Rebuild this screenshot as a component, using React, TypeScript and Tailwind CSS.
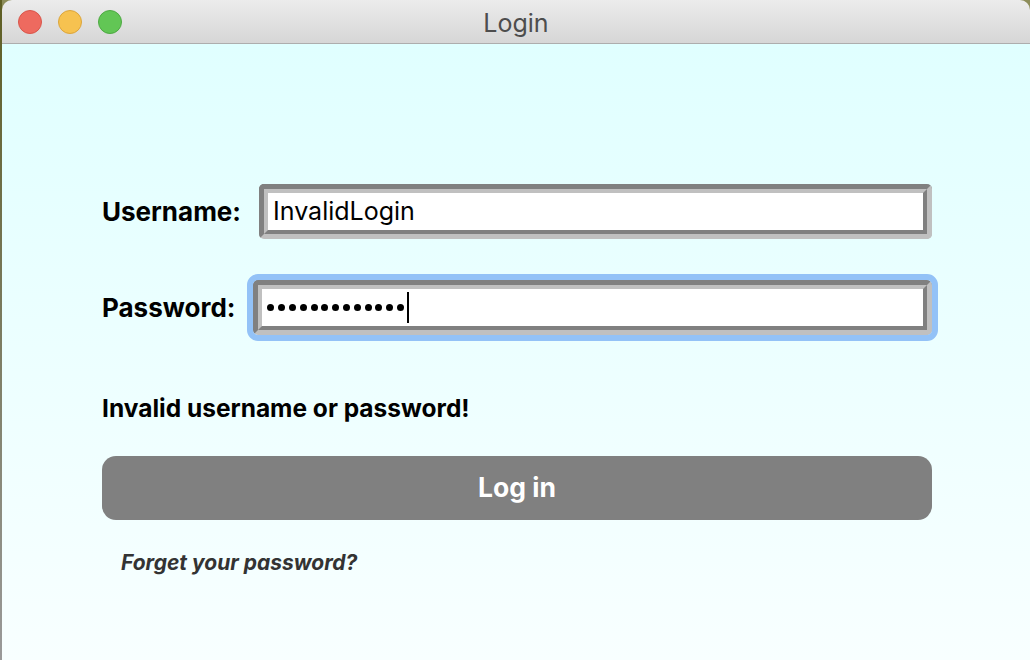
import { useState } from "react";

const font = { fontFamily: "Inter, 'Noto Sans', sans-serif" };

const Field = ({ children, focused }: { children: React.ReactNode; focused?: boolean }) => (
  <div
    className={`flex-1 rounded-[5px] ${
      focused ? "outline outline-[6px] outline-[#93c2f7]" : ""
    }`}
  >
    <div className="rounded-[5px] border-[5px] border-t-[#808080] border-l-[#808080] border-b-[#c0c0c0] border-r-[#c0c0c0]">
      <div className="h-[45px] border-[4px] border-t-[#c0c0c0] border-l-[#c0c0c0] border-b-[#808080] border-r-[#808080] bg-white flex items-center px-[4px]">
        {children}
      </div>
    </div>
  </div>
);

export default function App() {
  const [user] = useState("InvalidLogin");
  const dots = Array.from({ length: 13 });

  return (
    <div className="w-[1030px] h-[660px] bg-[#8d8d5a] flex" style={font}>
      <div className="w-[2px] bg-gradient-to-b from-[#5e5e22] to-[#9a9a9a]" />
      <div className="flex-1 flex flex-col rounded-t-[10px] overflow-hidden">
        {/* Title bar */}
        <div className="relative h-[44px] bg-gradient-to-b from-[#ececec] to-[#d6d6d6] border-b border-[#adadad] flex items-center justify-center pt-[2px]">
          <div className="absolute left-[16px] top-[10px] flex gap-[16px]">
            <span className="w-[24px] h-[24px] rounded-full bg-[#ee6a5f] border border-[#d8564b]" />
            <span className="w-[24px] h-[24px] rounded-full bg-[#f6c250] border border-[#dba53c]" />
            <span className="w-[24px] h-[24px] rounded-full bg-[#62c655] border border-[#4ea943]" />
          </div>
          <span className="text-[25px] text-[#4d4d4d] leading-[30px]">Login</span>
        </div>

        {/* Content */}
        <div className="flex-1 bg-gradient-to-b from-[#e0ffff] to-[#f8ffff] pl-[100px] pr-[98px] pt-[140px]">
          <div className="flex items-center gap-[18px]">
            <label className="text-[26px] font-bold text-black">Username:</label>
            <Field>
              <span className="text-[25px] text-black pl-[1px]">{user}</span>
            </Field>
          </div>

          <div className="flex items-center gap-[18px] mt-[41px]">
            <label className="text-[26px] font-bold text-black">Password:</label>
            <Field focused>
              <div className="flex items-center gap-[3.8px] pl-[1px]">
                {dots.map((_, i) => (
                  <span key={i} className="w-[7px] h-[7px] rounded-full bg-black" />
                ))}
              </div>
              <span className="ml-[3px] w-[2px] h-[31px] bg-black" />
            </Field>
          </div>

          <p className="mt-[58px] text-[24.5px] font-bold text-black leading-[30px]">
            Invalid username or password!
          </p>

          <button className="mt-[33px] w-full h-[64px] rounded-[14px] bg-[#808080] text-white text-[26.5px] font-bold">
            Log in
          </button>

          <p className="mt-[29px] pl-[19px] text-[21px] font-bold italic text-[#333333] leading-[28px]">
            Forget your password?
          </p>
        </div>
      </div>
    </div>
  );
}
